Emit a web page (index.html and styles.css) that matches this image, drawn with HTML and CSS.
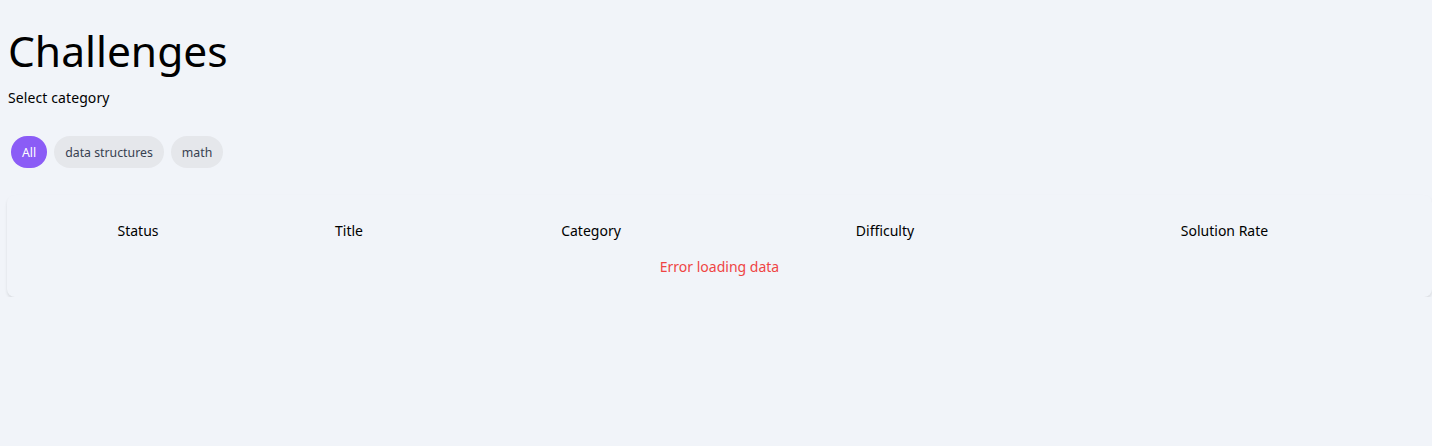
FILE: index.html
```html
<!DOCTYPE html>
<html lang="en">

<head>
    <meta charset="UTF-8">
    <meta name="viewport" content="width=device-width, initial-scale=1.0">
    <title>Challenges</title>

    <!-- Styles -->
    <link rel="stylesheet" href="styles.css">
</head>
<body>

    <main class="page">
        <h1 class="page-title">Challenges</h1>
        <p class="select-label">Select category</p>

        <!-- Category filter -->
        <div class="pills">
            <button class="pill active">All</button>
            <button class="pill">data structures</button>
            <button class="pill">math</button>
        </div>

        <!-- Challenge list -->
        <div class="card">
            <table class="challenges">
                <thead>
                    <tr>
                        <th class="col-status">Status</th>
                        <th class="col-title">Title</th>
                        <th class="col-category">Category</th>
                        <th class="col-difficulty">Difficulty</th>
                        <th class="col-rate">Solution Rate</th>
                    </tr>
                </thead>
                <tbody>
                    <tr>
                        <td colspan="5" class="error-text">Error loading data</td>
                    </tr>
                </tbody>
            </table>
        </div>
    </main>

</body>
</html>
```

FILE: styles.css
```css
:root {
    --bg-color: #f1f4f9;
    --text-color: #000;
    --accent-color: #8b5cf6;
    --pill-color: #e5e7eb;
    --pill-text: #374151;
    --error-color: #ef4444;
}

* {
    box-sizing: border-box;
    margin: 0;
    padding: 0;
}

body {
    font-family: "Noto Sans", sans-serif;
    background-color: var(--bg-color);
    color: var(--text-color);
}

.page {
    padding: 22px 0 0 7px;
}

.page-title {
    font-size: 42.5px;
    font-weight: 400;
    line-height: normal;
    padding-left: 1px;
}

.select-label {
    font-size: 14px;
    margin-top: 9px;
    padding-left: 1px;
    letter-spacing: 0.1px;
}

.pills {
    display: flex;
    gap: 7px;
    margin-top: 29px;
    padding-left: 4px;
}

.pill {
    font-family: inherit;
    font-size: 12.3px;
    height: 32px;
    padding: 0 11px;
    border: none;
    border-radius: 16px;
    background-color: var(--pill-color);
    color: var(--pill-text);
    cursor: pointer;
}

.pill.active {
    background-color: var(--accent-color);
    color: #fff;
}

.card {
    margin-top: 27px;
    padding: 16px 0 12px;
    border-radius: 8px;
    background-color: var(--bg-color);
    box-shadow: 0 2px 3px rgba(0, 0, 0, 0.1);
}

.challenges {
    width: 100%;
    table-layout: fixed;
    border-collapse: collapse;
    font-size: 14px;
}

.challenges th {
    font-weight: 400;
    text-align: center;
    padding: 10px 0;
}

.col-status { width: 262px; }
.col-title { width: 160px; }
.col-category { width: 324px; }
.col-difficulty { width: 264px; }

.error-text {
    text-align: center;
    color: var(--error-color);
    padding: 7px 0 9px;
}
```
